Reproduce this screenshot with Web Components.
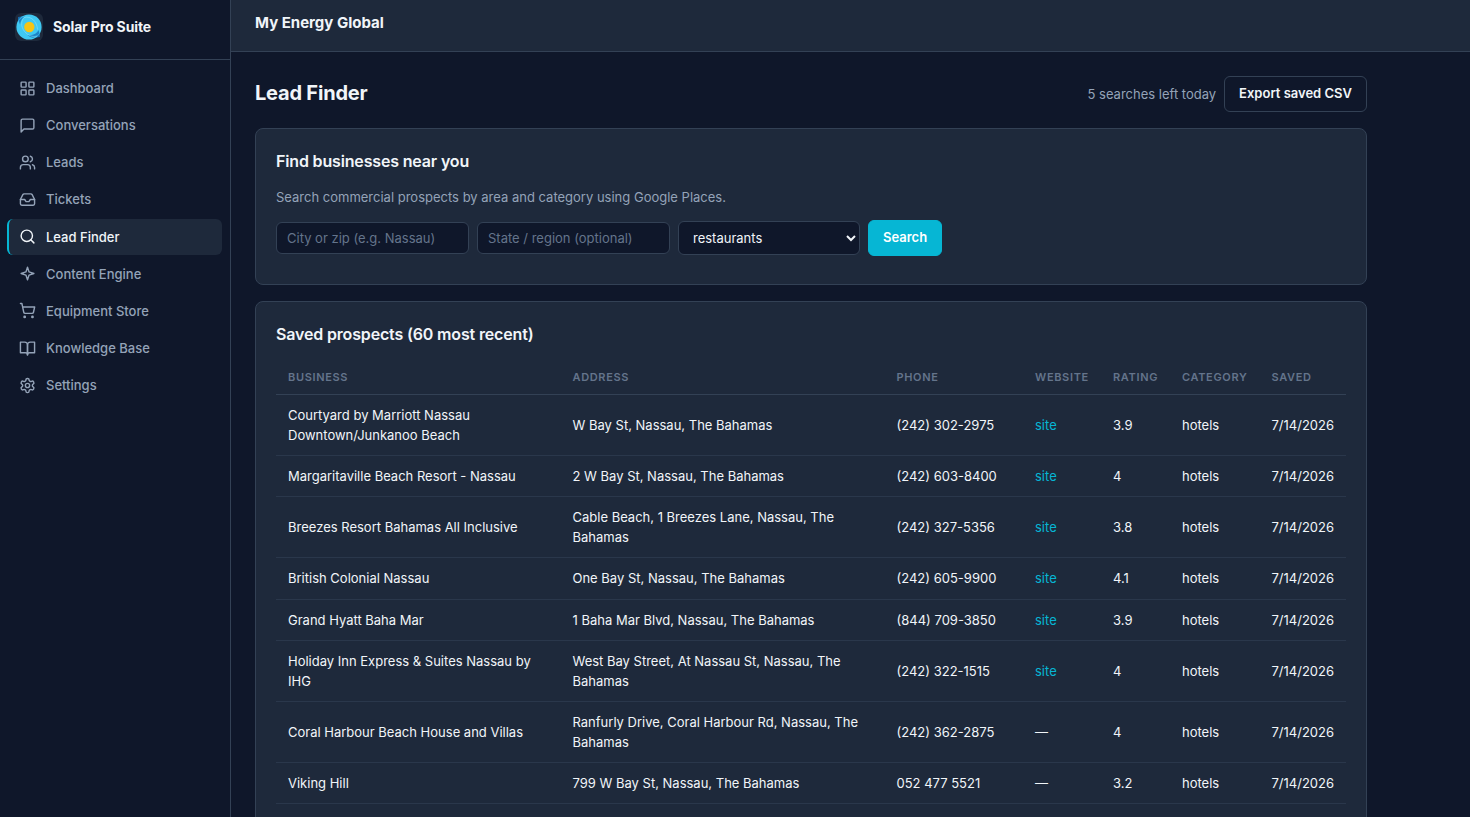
<!DOCTYPE html>
<html lang="en">
<head>
<meta charset="utf-8">
<title>Lead Finder</title>
<style>
  :root {
    --bg: #0f172a; --surface: #1e293b; --line: #334155;
    --text: #f1f5f9; --muted: #94a3b8; --subtle: #64748b; --accent: #06b6d4;
  }
  html, body { margin: 0; height: 100%; overflow: hidden; }
  body { background: var(--bg); color: var(--text); font: 13px/1.55 Inter, "Liberation Sans", sans-serif; }
</style>
</head>
<body>
<app-shell>
  <side-nav slot="side">
    <nav-item icon="grid">Dashboard</nav-item>
    <nav-item icon="chat">Conversations</nav-item>
    <nav-item icon="users">Leads</nav-item>
    <nav-item icon="inbox">Tickets</nav-item>
    <nav-item icon="search" active>Lead Finder</nav-item>
    <nav-item icon="spark">Content Engine</nav-item>
    <nav-item icon="cart">Equipment Store</nav-item>
    <nav-item icon="book">Knowledge Base</nav-item>
    <nav-item icon="gear">Settings</nav-item>
  </side-nav>
  <top-bar slot="top">My Energy Global</top-bar>
  <page-head>Lead Finder
    <span slot="note">5 searches left today</span>
    <ui-button slot="action" variant="outline">Export saved CSV</ui-button>
  </page-head>
  <ui-card heading="Find businesses near you"><search-form></search-form></ui-card>
  <ui-card heading="Saved prospects (60 most recent)"><prospect-table></prospect-table></ui-card>
</app-shell>
<script>
const define = (name, html, setup) => customElements.define(name, class extends HTMLElement {
  constructor() {
    super();
    this.attachShadow({ mode: 'open' }).innerHTML = html;
  }
  connectedCallback() { if (setup) setup(this, this.shadowRoot); }
});

const ICONS = {
  grid: '<rect x="3" y="3" width="7" height="7" rx="1"/><rect x="14" y="3" width="7" height="7" rx="1"/><rect x="14" y="14" width="7" height="7" rx="1"/><rect x="3" y="14" width="7" height="7" rx="1"/>',
  chat: '<path d="M21 15a2 2 0 0 1-2 2H7l-4 4V5a2 2 0 0 1 2-2h14a2 2 0 0 1 2 2z"/>',
  users: '<path d="M16 21v-2a4 4 0 0 0-4-4H6a4 4 0 0 0-4 4v2"/><circle cx="9" cy="7" r="4"/><path d="M22 21v-2a4 4 0 0 0-3-3.87"/><path d="M16 3.13a4 4 0 0 1 0 7.75"/>',
  inbox: '<path d="M22 12h-6l-2 3h-4l-2-3H2"/><path d="M5.45 5.11 2 12v6a2 2 0 0 0 2 2h16a2 2 0 0 0 2-2v-6l-3.45-6.89A2 2 0 0 0 16.76 4H7.24a2 2 0 0 0-1.79 1.11z"/>',
  search: '<circle cx="11" cy="11" r="8"/><path d="m21 21-4.3-4.3"/>',
  spark: '<path d="M12 3l2.200 6.800L21 12l-6.800 2.200L12 21l-2.200-6.800L3 12l6.800-2.200z"/>',
  cart: '<circle cx="8" cy="21" r="1"/><circle cx="19" cy="21" r="1"/><path d="M2.05 2.05h2l2.66 12.42a2 2 0 0 0 2 1.58h9.78a2 2 0 0 0 1.95-1.57l1.65-7.43H5.12"/>',
  book: '<path d="M2 3h6a4 4 0 0 1 4 4v14a3 3 0 0 0-3-3H2z"/><path d="M22 3h-6a4 4 0 0 0-4 4v14a3 3 0 0 1 3-3h7z"/>',
  gear: '<path d="M12.22 2h-.44a2 2 0 0 0-2 2v.18a2 2 0 0 1-1 1.73l-.43.25a2 2 0 0 1-2 0l-.15-.08a2 2 0 0 0-2.73.73l-.22.38a2 2 0 0 0 .73 2.73l.15.1a2 2 0 0 1 1 1.72v.51a2 2 0 0 1-1 1.74l-.15.09a2 2 0 0 0-.73 2.73l.22.38a2 2 0 0 0 2.73.73l.15-.08a2 2 0 0 1 2 0l.43.25a2 2 0 0 1 1 1.73V20a2 2 0 0 0 2 2h.44a2 2 0 0 0 2-2v-.18a2 2 0 0 1 1-1.73l.43-.25a2 2 0 0 1 2 0l.15.08a2 2 0 0 0 2.73-.73l.22-.39a2 2 0 0 0-.73-2.73l-.15-.08a2 2 0 0 1-1-1.74v-.5a2 2 0 0 1 1-1.74l.15-.09a2 2 0 0 0 .73-2.73l-.22-.38a2 2 0 0 0-2.73-.73l-.15.08a2 2 0 0 1-2 0l-.43-.25a2 2 0 0 1-1-1.73V4a2 2 0 0 0-2-2z"/><circle cx="12" cy="12" r="3"/>'
};

define('app-shell', `<style>
  :host { display: grid; grid-template-columns: 231px 1fr; height: 100vh; overflow: hidden; }
  .col { display: flex; flex-direction: column; min-width: 0; }
  main { box-sizing: border-box; max-width: 1160px; padding: 24px; display: flex; flex-direction: column; gap: 16px; }
  </style><slot name="side"></slot><div class="col"><slot name="top"></slot><main><slot></slot></main></div>`);

define('brand-mark', `<style>:host { display: block; width: 28px; height: 28px; } svg { display: block; }</style>
  <svg width="28" height="28" viewBox="0 0 28 28">
    <rect width="28" height="28" rx="6" fill="#1e293b"/>
    <path d="M3 4l6-1-6 7zM25 24l-6 1 6-7z" fill="#1766a8"/>
    <circle cx="14" cy="14" r="12.600" fill="#3fc8f2"/>
    <path d="M3.500 7.500Q6 4 10 3.200Q5.500 6.500 5 11.500zM24.500 20.500Q22 24 18 24.800Q15 24.500 12.500 22Q21 23 23.500 17z" fill="#1d83c6"/>
    <path d="M9 4.500C5 9 6.500 16 11 20c4 3.500 8 4 11 3M9 4.500c7-2 13 4 13.500 12" fill="none" stroke="#8be2f7" stroke-width=".6"/>
    <circle cx="14.300" cy="14" r="5.200" fill="#f6c414"/>
  </svg>`);

define('side-nav', `<style>
  :host { display: block; box-sizing: border-box; border-right: 1px solid var(--line); background: var(--bg); }
  header { box-sizing: border-box; height: 60px; padding: 13px 15px 0; border-bottom: 1px solid var(--line); display: flex; gap: 10px; align-items: flex-start; font-size: 14px; font-weight: 700; line-height: 28px; letter-spacing: -0.14px; }
  nav { padding: 10px 8px 10px 7px; display: flex; flex-direction: column; gap: 1px; }
  </style><header><brand-mark></brand-mark><span>Solar Pro Suite</span></header><nav><slot></slot></nav>`);

define('nav-item', `<style>
  :host { display: flex; align-items: center; gap: 10px; padding: 8px 10px; border-left: 2px solid transparent; border-radius: 6px; color: var(--muted); font-weight: 500; }
  :host([active]) { background: var(--surface); border-left-color: var(--accent); color: var(--text); }
  svg { width: 17px; height: 17px; fill: none; stroke: currentColor; stroke-width: 2; stroke-linecap: round; stroke-linejoin: round; }
  </style><svg viewBox="0 0 24 24"></svg><span><slot></slot></span>`,
  (el, root) => { root.querySelector('svg').innerHTML = ICONS[el.getAttribute('icon')]; });

define('top-bar', `<style>
  :host { display: block; box-sizing: border-box; height: 52px; flex: none; padding: 11px 24px 0; background: var(--surface); border-bottom: 1px solid var(--line); font-size: 15px; font-weight: 700; }
  </style><slot></slot>`);

define('page-head', `<style>
  :host { display: flex; align-items: center; justify-content: space-between; height: 36px; }
  h1 { margin: 0 0 1px; font-size: 20px; font-weight: 700; letter-spacing: -0.2px; }
  div { display: flex; align-items: center; gap: 8px; color: var(--muted); }
  slot[name=note] { display: block; }
  </style><h1><slot></slot></h1><div><slot name="note"></slot><slot name="action"></slot></div>`);

define('ui-button', `<style>
  :host { display: block; }
  button { display: block; box-sizing: border-box; height: 36px; margin: 0; padding: 0 14px 1px; border: 1px solid var(--accent); border-radius: 6px; background: var(--accent); color: #fff; font: 600 13px/1 Inter, sans-serif; white-space: nowrap; }
  :host([variant=outline]) button { background: transparent; border-color: var(--line); color: var(--text); }
  </style><button><slot></slot></button>`);

define('ui-card', `<style>
  :host { display: block; padding: 20px; background: var(--surface); border: 1px solid var(--line); border-radius: 8px; }
  h2 { margin: 0 0 14px; font-size: 16px; font-weight: 600; line-height: 24.8px; letter-spacing: -0.16px; }
  </style><h2></h2><slot></slot>`,
  (el, root) => { root.querySelector('h2').textContent = el.getAttribute('heading'); });

define('search-form', `<style>
  :host { display: block; padding-bottom: 8px; }
  p { margin: -0.8px 0 12.8px; color: var(--muted); }
  form { display: flex; align-items: center; gap: 8px; height: 36px; }
  input, select { box-sizing: border-box; margin: 0; border: 1px solid var(--line); border-radius: 6px; background-color: var(--bg); color: var(--text); font: 13px Inter, sans-serif; }
  input { width: 193px; height: 32px; padding: 0 10px; }
  input::placeholder { color: var(--subtle); }
  select { width: 182px; height: 34px; padding: 0 10px; }
  </style><p>Search commercial prospects by area and category using Google Places.</p>
  <form><input placeholder="City or zip (e.g. Nassau)"><input placeholder="State / region (optional)">
  <select><option>restaurants</option></select><ui-button>Search</ui-button></form>`);

const PROSPECTS = [
  ['Courtyard by Marriott Nassau Downtown/Junkanoo Beach', 'W Bay St, Nassau, The Bahamas', '(242) 302-2975', 1, '3.9'],
  ['Margaritaville Beach Resort - Nassau', '2 W Bay St, Nassau, The Bahamas', '(242) 603-8400', 1, '4'],
  ['Breezes Resort Bahamas All Inclusive', 'Cable Beach, 1 Breezes Lane, Nassau, The Bahamas', '(242) 327-5356', 1, '3.8'],
  ['British Colonial Nassau', 'One Bay St, Nassau, The Bahamas', '(242) 605-9900', 1, '4.1'],
  ['Grand Hyatt Baha Mar', '1 Baha Mar Blvd, Nassau, The Bahamas', '(844) 709-3850', 1, '3.9'],
  ['Holiday Inn Express & Suites Nassau by IHG', 'West Bay Street, At Nassau St, Nassau, The Bahamas', '(242) 322-1515', 1, '4'],
  ['Coral Harbour Beach House and Villas', 'Ranfurly Drive, Coral Harbour Rd, Nassau, The Bahamas', '(242) 362-2875', 0, '4'],
  ['Viking Hill', '799 W Bay St, Nassau, The Bahamas', '052 477 5521', 0, '3.2']
];

define('prospect-table', `<style>
  :host { display: block; padding-bottom: 30px; }
  table { width: 1070px; table-layout: fixed; border-collapse: separate; border-spacing: 0; font-size: 13px; }
  th { padding: 8px 12px; border-bottom: 1px solid var(--line); color: var(--subtle); text-align: left; font-size: 11px; font-weight: 600; letter-spacing: 0.66px; text-transform: uppercase; }
  td { padding: 10px 12px; border-bottom: 1px solid #2a374b; vertical-align: middle; }
  a { color: var(--accent); text-decoration: none; }
  </style><table><colgroup><col style="width:284.500px"><col style="width:324px"><col style="width:138.500px"><col style="width:78px"><col style="width:69px"><col style="width:89.500px"><col style="width:86.500px"></colgroup>
  <thead><tr><th>Business</th><th>Address</th><th>Phone</th><th>Website</th><th>Rating</th><th>Category</th><th>Saved</th></tr></thead><tbody></tbody></table>`,
  (el, root) => {
    root.querySelector('tbody').innerHTML = PROSPECTS.map(([name, address, phone, site, rating]) =>
      `<tr><td>${name.replace('&', '&amp;')}</td><td>${address}</td><td>${phone}</td><td>${site ? '<a href="#">site</a>' : '—'}</td><td>${rating}</td><td>hotels</td><td>7/14/2026</td></tr>`).join('');
  });
</script>
</body>
</html>
